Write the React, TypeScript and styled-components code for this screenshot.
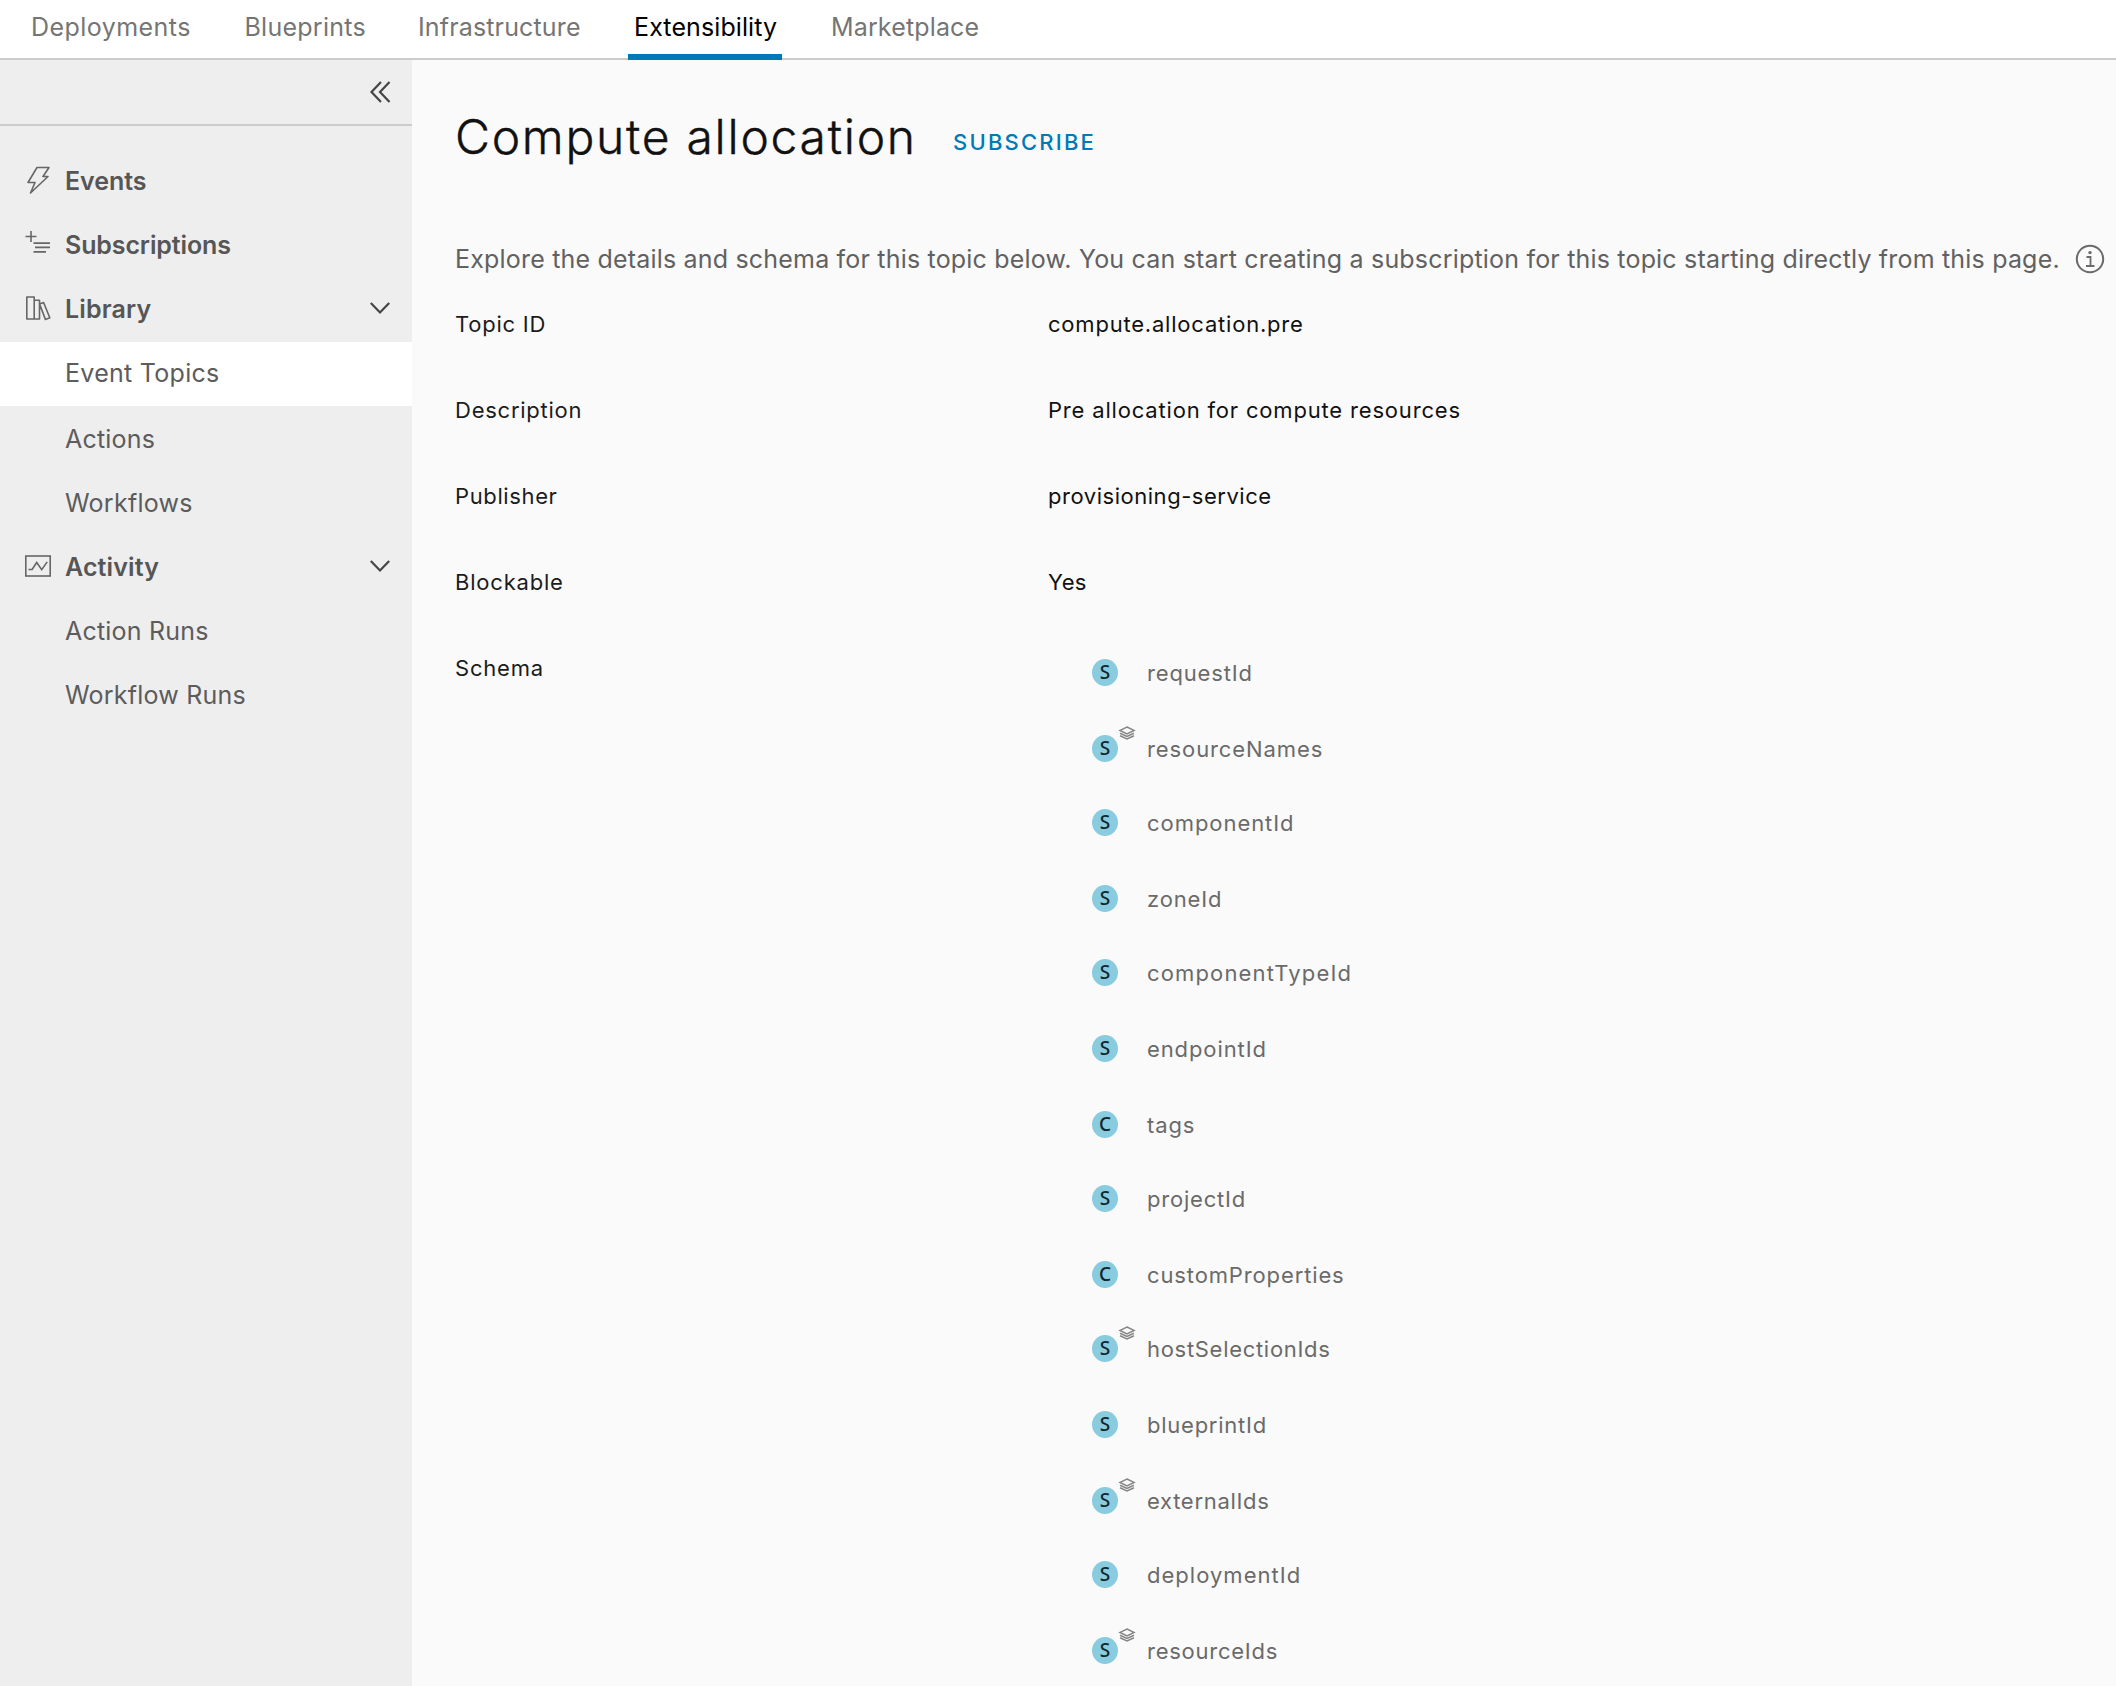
import React from "react";
import styled, { createGlobalStyle, css } from "styled-components";

const GlobalStyle = createGlobalStyle`
  * { box-sizing: border-box; }
  body {
    margin: 0;
    background: #fafafa;
    color: #565656;
    font-family: Inter, "Liberation Sans", sans-serif;
    overflow: hidden;
  }
`;

const Page = styled.div`
  display: flex;
  flex-direction: column;
  width: 2116px;
  height: 1686px;
  overflow: hidden;
`;

const TopNav = styled.nav`
  display: flex;
  height: 60px;
  flex: none;
  padding-left: 25px;
  background: #fff;
  border-bottom: 2px solid #ccc;
`;

const Tab = styled.a<{ $active?: boolean; $track: number; $width: number }>`
  height: 60px;
  width: ${(p) => p.$width}px;
  margin-right: 43px;
  flex: none;
  padding-left: 6px;
  font-size: 25px;
  line-height: 54px;
  white-space: nowrap;
  letter-spacing: ${(p) => p.$track}px;
  color: #757575;
  ${(p) =>
    p.$active &&
    css`
      color: #000;
      border-bottom: 6px solid #0079b8;
    `}
`;

const Body = styled.div`
  display: flex;
  flex: 1;
  min-height: 0;
`;

const Sidebar = styled.aside`
  width: 412px;
  flex: none;
  background: #eee;
`;

const CollapseBar = styled.div`
  display: flex;
  justify-content: flex-end;
  height: 66px;
  padding: 26px 21px 0 0;
  border-bottom: 2px solid #ccc;
`;

const Menu = styled.div`
  display: flex;
  flex-direction: column;
  padding-top: 24px;
`;

const GroupRow = styled.div`
  display: flex;
  align-items: center;
  height: 64px;
  padding: 0 21px 0 24px;
`;

const GroupIcon = styled.svg`
  width: 28px;
  height: 28px;
  margin: -4px 13px 0 0;
  flex: none;
  fill: none;
  stroke: #666;
  stroke-width: 1.6;
`;

const GroupLabel = styled.span<{ $track: number }>`
  flex: 1;
  font-size: 25px;
  font-weight: 600;
  line-height: 64px;
  letter-spacing: ${(p) => p.$track}px;
  color: #565656;
  padding-bottom: 2px;
`;

const Chevron = styled.svg`
  width: 22px;
  height: 22px;
  margin-top: -5px;
  flex: none;
  fill: none;
  stroke: #454545;
  stroke-width: 2.2;
`;

const MenuLink = styled.a<{ $active?: boolean; $track: number }>`
  height: 64px;
  margin-bottom: ${(p) => (p.$active ? 2 : 0)}px;
  padding-left: 65px;
  font-size: 25px;
  line-height: 62px;
  letter-spacing: ${(p) => p.$track}px;
  color: #5c5c5c;
  background: ${(p) => (p.$active ? "#fff" : "transparent")};
`;

const Content = styled.main`
  flex: 1;
  min-width: 0;
  padding: 45px 0 0 43px;
`;

const TitleRow = styled.header`
  display: flex;
  align-items: baseline;
  height: 126px;
`;

const Title = styled.h1`
  margin: 0;
  width: 498px;
  font-size: 48px;
  font-weight: 300;
  line-height: 64px;
  letter-spacing: 1.72px;
  color: #111;
  -webkit-text-stroke: 0.4px #111;
  white-space: nowrap;
`;

const Subscribe = styled.button`
  padding: 0;
  border: 0;
  background: none;
  font: 500 22px Inter, sans-serif;
  letter-spacing: 2.2px;
  color: #0079b8;
  position: relative;
  top: -4px;
`;

const Intro = styled.p`
  display: flex;
  align-items: center;
  height: 56px;
  margin: 0 0 1px;
  font-size: 25px;
  letter-spacing: 0.19px;
  white-space: nowrap;
  color: #616161;
`;

const InfoIcon = styled.svg`
  width: 30px;
  height: 30px;
  margin-left: 15px;
  flex: none;
`;

const Details = styled.dl`
  display: grid;
  grid-template-columns: 593px 1fr;
  grid-auto-rows: 86px;
  margin: 0;
`;

const Term = styled.dt<{ $track: number }>`
  font-size: 22px;
  line-height: 73px;
  letter-spacing: ${(p) => p.$track}px;
  color: #1c1c1c;
  white-space: nowrap;
`;

const Value = styled.dd<{ $track: number }>`
  margin: 0;
  font-size: 22px;
  line-height: 73px;
  letter-spacing: ${(p) => p.$track}px;
  color: #111;
  white-space: nowrap;
`;

const Tree = styled.ul`
  list-style: none;
  margin: 3px 0 0;
  padding: 0 0 0 44px;
`;

const Node = styled.li<{ $height: number }>`
  display: flex;
  align-items: flex-start;
  height: ${(p) => p.$height}px;
`;

const TypeBadge = styled.span`
  position: relative;
  width: 26px;
  height: 27px;
  margin-top: 24px;
  flex: none;
  border-radius: 50%;
  background: #89cbdf;
  color: #12262e;
  font: 500 19px/26px "Noto Sans", sans-serif;
  text-align: center;
`;

const ArrayMark = styled.svg`
  position: absolute;
  left: 26px;
  top: -9px;
  width: 18px;
  height: 14px;
  fill: none;
  stroke: #868686;
  stroke-width: 1.5;
`;

const NodeName = styled.span<{ $track: number }>`
  margin-left: 29px;
  font-size: 22px;
  line-height: 77px;
  letter-spacing: ${(p) => p.$track}px;
  color: #6a6a6a;
  white-space: nowrap;
`;

const tabs = [
  { label: "Deployments", track: 0.45, width: 170.5 },
  { label: "Blueprints", track: 0.25, width: 130.5 },
  { label: "Infrastructure", track: 0.15, width: 173 },
  { label: "Extensibility", track: 0.1, width: 154, active: true },
  { label: "Marketplace", track: 0.15, width: 160 },
];

const BoltIcon = () => (
  <GroupIcon viewBox="0 0 28 28">
    <path d="M13 1.5 H25 L19 10.5 H24 L6.5 27 L11 16.5 H4 Z" strokeLinejoin="round" />
  </GroupIcon>
);

const SubscriptionsIcon = () => (
  <GroupIcon viewBox="0 0 28 28">
    <path d="M1.5 6.5h11M7 1v11" />
    <path d="M9.5 13.2H26M11 17.4H26M9.5 21.8H22" strokeWidth="1.8" />
  </GroupIcon>
);

const LibraryIcon = () => (
  <GroupIcon viewBox="0 0 28 28">
    <path d="M2.8 3h7.4v22H2.8zM10.2 6.2h5.3V25h-5.3M15.6 10l4-1.5 6.2 15.3-4.4 1.6z" strokeLinejoin="round" />
  </GroupIcon>
);

const ActivityIcon = () => (
  <GroupIcon viewBox="0 0 28 28">
    <rect x="1.8" y="4" width="24.4" height="20" />
    <path d="M4.5 17.5h3.6l4.6-7 5 7.2 5.5-7.8" />
  </GroupIcon>
);

const ChevronDown = () => (
  <Chevron viewBox="0 0 22 22">
    <path d="M1.8 6 11 15.5 20.2 6" />
  </Chevron>
);

const details = [
  { term: "Topic ID", t: 0.75, value: "compute.allocation.pre", v: 0.79 },
  { term: "Description", t: 0.75, value: "Pre allocation for compute resources", v: 0.82 },
  { term: "Publisher", t: 0.62, value: "provisioning-service", v: 0.53 },
  { term: "Blockable", t: 0.8, value: "Yes", v: 0.4 },
];

const nodes = [
  { name: "requestId", type: "S", height: 76, track: 0.85 },
  { name: "resourceNames", type: "S", height: 74, track: 0.9, array: true },
  { name: "componentId", type: "S", height: 76, track: 0.95 },
  { name: "zoneId", type: "S", height: 74, track: 0.85 },
  { name: "componentTypeId", type: "S", height: 76, track: 1.15 },
  { name: "endpointId", type: "S", height: 76, track: 0.9 },
  { name: "tags", type: "C", height: 74, track: 0.9 },
  { name: "projectId", type: "S", height: 76, track: 0.8 },
  { name: "customProperties", type: "C", height: 74, track: 0.87 },
  { name: "hostSelectionIds", type: "S", height: 76, track: 0.7, array: true },
  { name: "blueprintId", type: "S", height: 76, track: 0.75 },
  { name: "externalIds", type: "S", height: 74, track: 0.7, array: true },
  { name: "deploymentId", type: "S", height: 76, track: 1.02 },
  { name: "resourceIds", type: "S", height: 76, track: 0.75, array: true },
];

export default function App() {
  return (
    <Page>
      <GlobalStyle />
      <TopNav>
        {tabs.map((tab) => (
          <Tab key={tab.label} $active={tab.active} $track={tab.track} $width={tab.width}>
            {tab.label}
          </Tab>
        ))}
      </TopNav>
      <Body>
        <Sidebar>
          <CollapseBar>
            <Chevron viewBox="0 0 22 22">
              <path d="M12 1 2.5 11 12 21M20.5 1 11 11 20.5 21" />
            </Chevron>
          </CollapseBar>
          <Menu>
            <GroupRow>
              <BoltIcon />
              <GroupLabel $track={-0.05}>Events</GroupLabel>
            </GroupRow>
            <GroupRow>
              <SubscriptionsIcon />
              <GroupLabel $track={-0.12}>Subscriptions</GroupLabel>
            </GroupRow>
            <GroupRow>
              <LibraryIcon />
              <GroupLabel $track={0.15}>Library</GroupLabel>
              <ChevronDown />
            </GroupRow>
            <MenuLink $active $track={0.28}>Event Topics</MenuLink>
            <MenuLink $track={0.2}>Actions</MenuLink>
            <MenuLink $track={0.25}>Workflows</MenuLink>
            <GroupRow>
              <ActivityIcon />
              <GroupLabel $track={0.12}>Activity</GroupLabel>
              <ChevronDown />
            </GroupRow>
            <MenuLink $track={0.2}>Action Runs</MenuLink>
            <MenuLink $track={0.22}>Workflow Runs</MenuLink>
          </Menu>
        </Sidebar>
        <Content>
          <TitleRow>
            <Title>Compute allocation</Title>
            <Subscribe>SUBSCRIBE</Subscribe>
          </TitleRow>
          <Intro>
            Explore the details and schema for this topic below. You can start creating a subscription for this topic
            starting directly from this page.
            <InfoIcon viewBox="0 0 30 30" fill="none" stroke="#6a6a6a" strokeWidth="2">
              <circle cx="15" cy="15" r="13.2" />
              <path d="M11.5 13h4v9M11 22h8.5" strokeWidth="1.8" />
              <circle cx="15" cy="8.6" r="1.7" fill="#6a6a6a" stroke="none" />
            </InfoIcon>
          </Intro>
          <Details>
            {details.map((row) => (
              <React.Fragment key={row.term}>
                <Term $track={row.t}>{row.term}</Term>
                <Value $track={row.v}>{row.value}</Value>
              </React.Fragment>
            ))}
            <Term $track={0.8}>Schema</Term>
            <Value $track={0}>
              <Tree>
                {nodes.map((node) => (
                  <Node key={node.name} $height={node.height}>
                    <TypeBadge>
                      {node.type}
                      {node.array && (
                        <ArrayMark viewBox="0 0 18 14">
                          <path d="M9 1 16 4.4 9 7.8 2 4.4Z" />
                          <path d="M2 7.2 9 10.4 16 7.2M2 9.8 9 13 16 9.8" />
                        </ArrayMark>
                      )}
                    </TypeBadge>
                    <NodeName $track={node.track}>{node.name}</NodeName>
                  </Node>
                ))}
              </Tree>
            </Value>
          </Details>
        </Content>
      </Body>
    </Page>
  );
}
